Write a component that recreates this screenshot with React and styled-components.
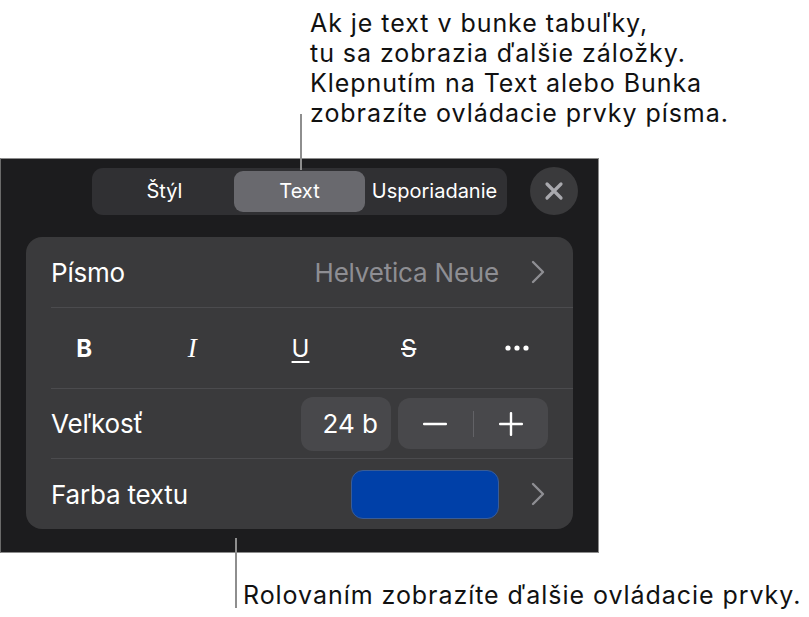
import styled, { createGlobalStyle } from "styled-components";

const GlobalStyle = createGlobalStyle`
  html, body {
    margin: 0;
    padding: 0;
    background: #ffffff;
  }
  body {
    font-family: Inter, "Noto Sans", "Liberation Sans", sans-serif;
    -webkit-font-smoothing: antialiased;
  }
`;

const Page = styled.div`
  position: relative;
  width: 809px;
  height: 617px;
  overflow: hidden;
`;

const Callout = styled.div`
  padding-left: ${(p) => p.$left}px;
  padding-top: ${(p) => p.$top || 0}px;
  height: ${(p) => p.$height}px;
  box-sizing: border-box;
  font-size: 25px;
  line-height: 30px;
  color: #111111;
  letter-spacing: 0.95px;
  white-space: nowrap;
`;

const Leader = styled.div`
  position: absolute;
  left: ${(p) => p.$x}px;
  top: ${(p) => p.$y}px;
  width: 2px;
  height: ${(p) => p.$h}px;
  background: #8e8e8e;
  z-index: 2;
`;

const Panel = styled.div`
  width: 599px;
  height: 395px;
  box-sizing: border-box;
  background: #1c1c1e;
  border: 1px solid #8c8c8c;
  border-left-color: #6a6a6a;
  padding: 8px 0 0 25px;
`;

const Header = styled.div`
  display: flex;
  align-items: center;
  gap: 23px;
  padding-left: 66px;
`;

const Segmented = styled.div`
  display: grid;
  grid-template-columns: 139px 131px 139px;
  padding: 3px;
  width: 415px;
  height: 47px;
  box-sizing: border-box;
  background: #303033;
  border-radius: 11px;
`;

const Segment = styled.div`
  display: flex;
  align-items: center;
  justify-content: center;
  border-radius: 9px;
  font-size: 20px;
  color: #ffffff;
  background: ${(p) => (p.$active ? "#69696e" : "transparent")};
`;

const CloseButton = styled.div`
  width: 48px;
  height: 48px;
  border-radius: 50%;
  background: #3a3a3c;
  display: flex;
  align-items: center;
  justify-content: center;
`;

const Card = styled.div`
  margin-top: 22px;
  width: 547px;
  height: 292px;
  background: #3a3a3c;
  border-radius: 16px;
  overflow: hidden;
  display: flex;
  flex-direction: column;
`;

const Row = styled.div`
  height: ${(p) => p.$h}px;
  padding-left: 25px;
  flex-shrink: 0;
`;

const RowInner = styled.div`
  height: 100%;
  box-sizing: border-box;
  display: flex;
  align-items: center;
  padding-right: ${(p) => p.$pr || 0}px;
  border-bottom: ${(p) => (p.$last ? "none" : "1px solid #4b4b4e")};
`;

const Label = styled.div`
  font-size: 26px;
  color: #ffffff;
  flex: 1;
  letter-spacing: -0.2px;
`;

const Value = styled.div`
  font-size: 26px;
  color: #8e8e93;
  letter-spacing: -0.2px;
  margin-right: 32px;
`;

const FormatBar = styled.div`
  height: 100%;
  box-sizing: border-box;
  display: grid;
  grid-template-columns: repeat(5, 1fr);
  margin-left: -25px;
  padding: 0 2px 0 4px;
  border-bottom: 1px solid #4b4b4e;
  position: relative;

  &::before {
    content: "";
    position: absolute;
    left: 0;
    bottom: -1px;
    width: 25px;
    height: 1px;
    background: #3a3a3c;
  }
`;

const FormatButton = styled.div`
  display: flex;
  align-items: center;
  justify-content: center;
  color: #ffffff;
  font-size: ${(p) => (p.$serif ? 27 : 24)}px;
  font-weight: ${(p) => (p.$bold ? 700 : 400)};
  font-style: ${(p) => (p.$italic ? "italic" : "normal")};
  font-family: ${(p) =>
    p.$serif ? '"Liberation Serif", "DejaVu Serif", serif' : "inherit"};
  text-decoration: ${(p) => p.$deco || "none"};
  text-decoration-thickness: 2px;
  text-underline-offset: 4px;
`;

const SizeBox = styled.div`
  width: 90px;
  height: 54px;
  border-radius: 12px;
  background: #48484b;
  display: flex;
  align-items: center;
  justify-content: flex-end;
  padding-right: 13px;
  box-sizing: border-box;
  font-size: 26px;
  color: #ffffff;
  margin-right: 7px;
`;

const Stepper = styled.div`
  width: 150px;
  height: 51px;
  border-radius: 12px;
  background: #48484b;
  display: grid;
  grid-template-columns: 1fr 1px 1fr;
  align-items: center;
`;

const StepDivider = styled.div`
  height: 26px;
  background: #626266;
`;

const StepButton = styled.div`
  display: flex;
  align-items: center;
  justify-content: center;
`;

const Swatch = styled.div`
  width: 148px;
  height: 49px;
  box-sizing: border-box;
  border-radius: 12px;
  background: #0040a8;
  border: 1px solid #3a5c95;
  margin-right: 32px;
`;

const Chevron = () => (
  <svg width="14" height="24" viewBox="0 0 14 24">
    <path
      d="M2 2 L12 12 L2 22"
      fill="none"
      stroke="#8e8e93"
      strokeWidth="2.4"
      strokeLinecap="round"
      strokeLinejoin="round"
    />
  </svg>
);

const Dots = () => (
  <svg width="24" height="6" viewBox="0 0 24 6">
    <circle cx="3" cy="3" r="2.6" fill="#fff" />
    <circle cx="12" cy="3" r="2.6" fill="#fff" />
    <circle cx="21" cy="3" r="2.6" fill="#fff" />
  </svg>
);

const App = () => {
  return (
    <Page>
      <GlobalStyle />
      <Callout $left={310} $top={8} $height={158}>
        Ak je text v bunke tabuľky,
        <br />
        tu sa zobrazia ďalšie záložky.
        <br />
        Klepnutím na Text alebo Bunka
        <br />
        zobrazíte ovládacie prvky písma.
      </Callout>
      <Leader $x={300} $y={114} $h={56} />

      <Panel>
        <Header>
          <Segmented>
            <Segment>Štýl</Segment>
            <Segment $active>Text</Segment>
            <Segment>Usporiadanie</Segment>
          </Segmented>
          <CloseButton>
            <svg width="20" height="20" viewBox="0 0 20 20">
              <path
                d="M3 3 L17 17 M17 3 L3 17"
                stroke="#a9a9ae"
                strokeWidth="3.2"
                strokeLinecap="round"
              />
            </svg>
          </CloseButton>
        </Header>

        <Card>
          <Row $h={71}>
            <RowInner $pr={28}>
              <Label>Písmo</Label>
              <Value>Helvetica Neue</Value>
              <Chevron />
            </RowInner>
          </Row>
          <Row $h={81}>
            <FormatBar>
              <FormatButton $bold>B</FormatButton>
              <FormatButton $italic $serif>
                I
              </FormatButton>
              <FormatButton $deco="underline">U</FormatButton>
              <FormatButton $deco="line-through">S</FormatButton>
              <FormatButton>
                <Dots />
              </FormatButton>
            </FormatBar>
          </Row>
          <Row $h={70}>
            <RowInner $pr={25}>
              <Label>Veľkosť</Label>
              <SizeBox>24 b</SizeBox>
              <Stepper>
                <StepButton>
                  <svg width="24" height="4" viewBox="0 0 24 4">
                    <rect x="0" y="0.8" width="24" height="2.4" rx="1" fill="#fff" />
                  </svg>
                </StepButton>
                <StepDivider />
                <StepButton>
                  <svg width="24" height="24" viewBox="0 0 24 24">
                    <rect x="0" y="10.8" width="24" height="2.4" rx="1" fill="#fff" />
                    <rect x="10.8" y="0" width="2.4" height="24" rx="1" fill="#fff" />
                  </svg>
                </StepButton>
              </Stepper>
            </RowInner>
          </Row>
          <Row $h={70}>
            <RowInner $pr={28} $last>
              <Label>Farba textu</Label>
              <Swatch />
              <Chevron />
            </RowInner>
          </Row>
        </Card>
      </Panel>

      <Leader $x={235} $y={538} $h={70} />
      <Callout $left={243} $top={27} $height={64}>
        Rolovaním zobrazíte ďalšie ovládacie prvky.
      </Callout>
    </Page>
  );
};

export default App;
